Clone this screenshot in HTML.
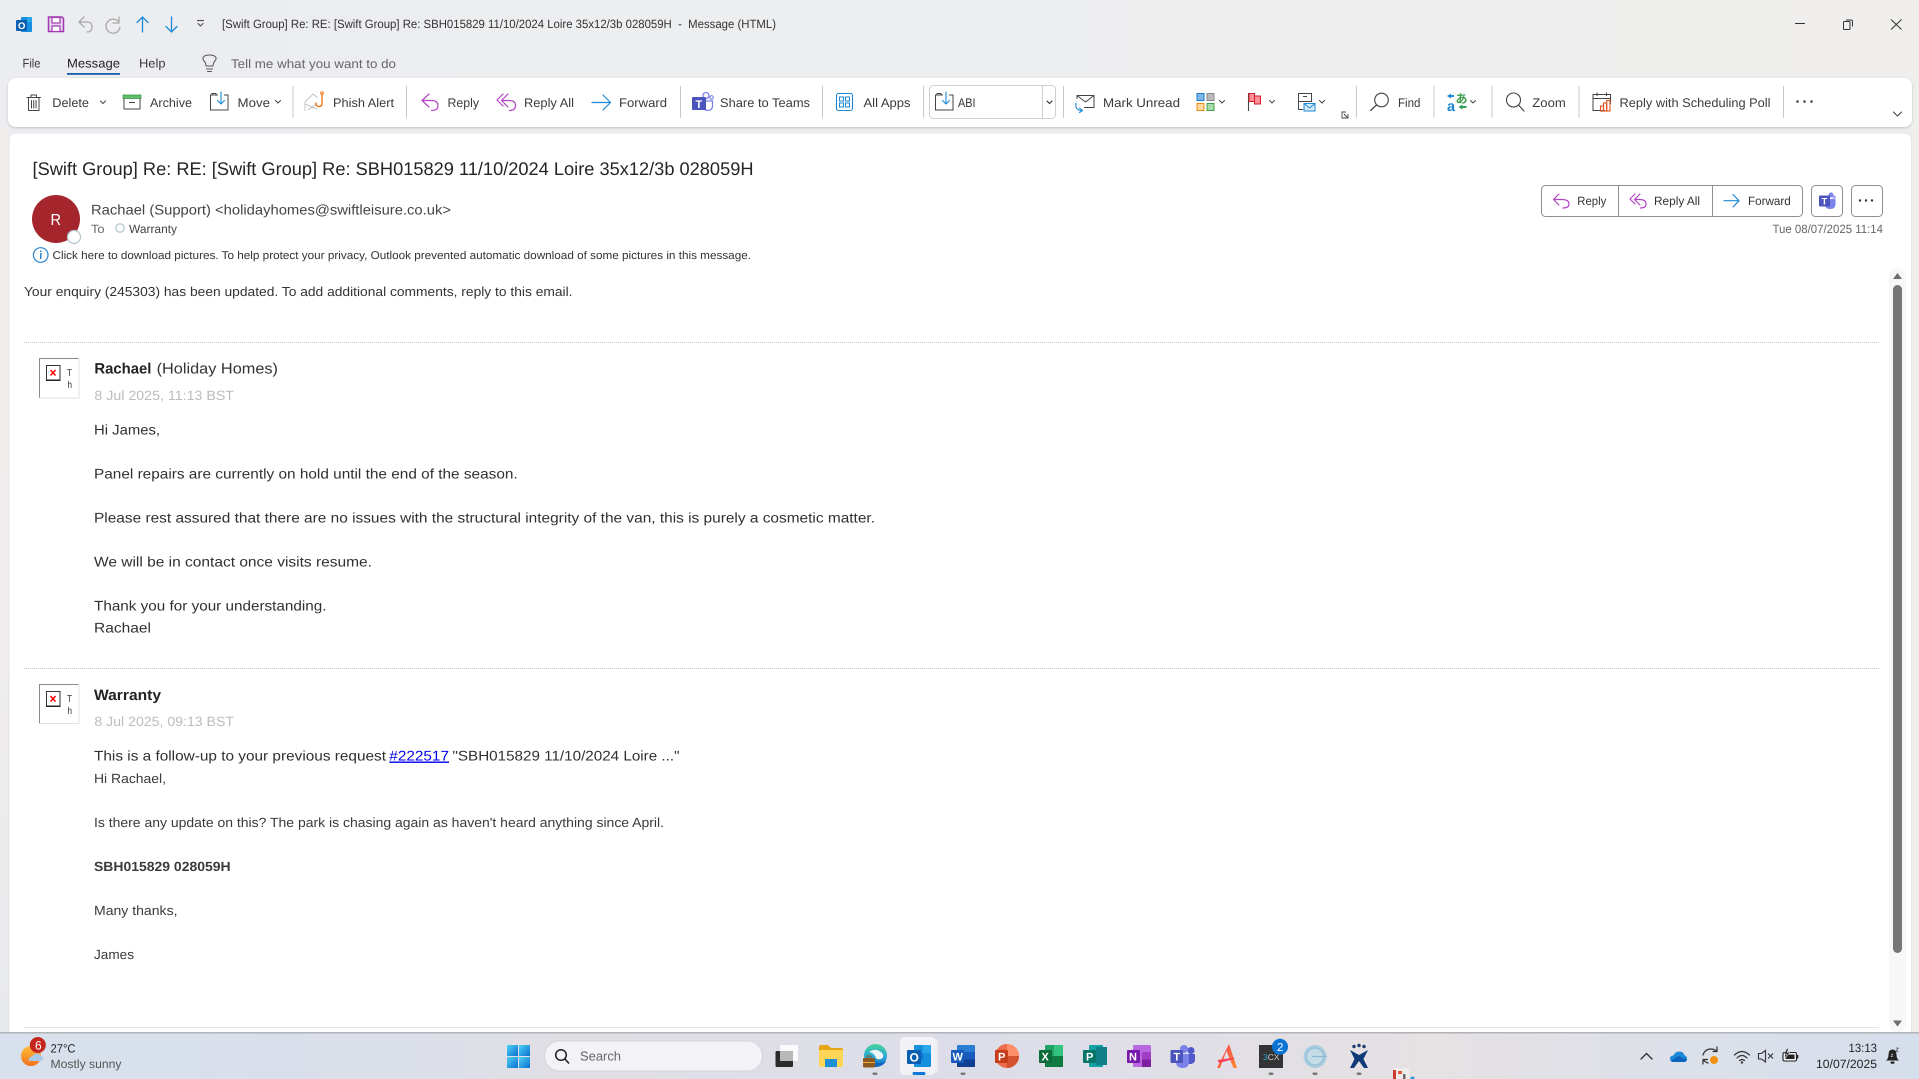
<!DOCTYPE html>
<html lang="en"><head><meta charset="utf-8"><title>[Swift Group] Re: RE: [Swift Group] Re: SBH015829 - Message (HTML)</title>
<style>
html,body{margin:0;padding:0;width:1919px;height:1079px;overflow:hidden;background:#ecedf0}
svg{display:block}
text{font-family:"Liberation Sans","Noto Sans CJK JP",sans-serif;fill:#333;text-rendering:geometricPrecision;white-space:pre}
.t{font-size:12.5px;fill:#3a3a3a}
.b{font-size:14px;fill:#303030}
.m{font-size:13.3px;fill:#3b3b3b}
.s{font-size:12px;fill:#666}
.i{stroke-linecap:round;stroke-linejoin:round;fill:none}
</style></head><body>
<svg xmlns="http://www.w3.org/2000/svg" width="1919" height="1079" viewBox="0 0 1919 1079">
<defs>
<linearGradient id="chrome" x1="0" x2="1" y1="0" y2="0"><stop offset="0" stop-color="#ecedf0"/><stop offset="0.5" stop-color="#edeef0"/><stop offset="1" stop-color="#efeeec"/></linearGradient>
<linearGradient id="side" x1="0" x2="0" y1="0" y2="1"><stop offset="0" stop-color="#f0eeec"/><stop offset="0.6" stop-color="#efeded"/><stop offset="1" stop-color="#e8e9ec"/></linearGradient>
<linearGradient id="task" x1="0" x2="1" y1="0" y2="0"><stop offset="0" stop-color="#d7e0ec"/><stop offset="0.2" stop-color="#dadfea"/><stop offset="0.3" stop-color="#e2dfe4"/><stop offset="0.5" stop-color="#dcdde9"/><stop offset="0.75" stop-color="#e6e1e3"/><stop offset="0.88" stop-color="#dce0e9"/><stop offset="1" stop-color="#d5deeb"/></linearGradient>
<linearGradient id="win" x1="0" x2="1" y1="0" y2="1"><stop offset="0" stop-color="#4fd2f5"/><stop offset="1" stop-color="#0a6fd0"/></linearGradient>
<linearGradient id="sun" x1="0" x2="0" y1="0" y2="1"><stop offset="0" stop-color="#ffc03a"/><stop offset="1" stop-color="#f2701c"/></linearGradient>
<linearGradient id="adobe" x1="0" x2="1" y1="0" y2="1"><stop offset="0" stop-color="#fb3e5a"/><stop offset="1" stop-color="#fb8a2a"/></linearGradient>
<linearGradient id="edge" x1="0" x2="0" y1="0" y2="1"><stop offset="0" stop-color="#46d39a"/><stop offset=".55" stop-color="#2aa8d8"/><stop offset="1" stop-color="#1268c0"/></linearGradient>
<filter id="sh" x="-2%" y="-20%" width="104%" height="150%"><feDropShadow dx="0" dy="1" stdDeviation="1.2" flood-color="#000" flood-opacity=".18"/></filter>
</defs>

<rect width="1919" height="1079" fill="url(#chrome)"/>
<rect x="0" y="128" width="9" height="905" fill="url(#side)"/>

<!-- Title bar -->
<rect x="21" y="17" width="11" height="15" rx="1" fill="#1490df"/><rect x="27" y="17" width="5" height="5" fill="#28a8ea"/><rect x="16" y="20" width="11" height="11" rx="1" fill="#0a5fb0"/><text x="18" y="29" style="font-size:9.5px;font-weight:bold;fill:#fff">O</text>
<path d="M48.500 17H62L63.500 18.500V31.500H48.500Z" fill="#e8d3ee" stroke="#a03cb0" stroke-width="1.500"/><rect x="52" y="17.500" width="8" height="5.500" fill="#fff" stroke="#a03cb0" stroke-width="1.200"/><rect x="52" y="26" width="8" height="5.500" fill="#fff" stroke="#a03cb0" stroke-width="1.200"/>
<path class="i" d="M84 17L79 22L84 27M79.500 22H87Q92 22 92 27Q92 32 87 32" stroke="#aaa" stroke-width="1.300"/>
<path class="i" d="M119 17V23H113M119 22.500A7 7 0 1 0 120 27" stroke="#aaa" stroke-width="1.300"/>
<path class="i" d="M142.500 17V32M137 22.500L142.500 17L148 22.500" stroke="#1a8ad8" stroke-width="1.300"/>
<path class="i" d="M171.500 17V32M166 26.500L171.500 32L177 26.500" stroke="#1a8ad8" stroke-width="1.300"/>
<path d="M197 20.500H204" stroke="#555" stroke-width="1.200"/><path class="i" d="M198 23.500L200.500 26L203 23.500" stroke="#555" stroke-width="1.200"/>
<text x="222" y="28.200" style="font-size:12px" fill="#333" textLength="554" lengthAdjust="spacingAndGlyphs">[Swift Group] Re: RE: [Swift Group] Re: SBH015829 11/10/2024 Loire 35x12/3b 028059H  -  Message (HTML)</text>
<path d="M1795 23.500H1805" stroke="#333" stroke-width="1"/>
<rect x="1843.500" y="21.500" width="6.500" height="8" rx="1" fill="none" stroke="#333" stroke-width="1"/><path d="M1846 20H1851Q1852.500 20 1852.500 21.500V26.500" fill="none" stroke="#333" stroke-width="1"/>
<path d="M1891 19.500L1901.500 29.500M1901.500 19.500L1891 29.500" stroke="#333" stroke-width="1"/>

<!-- Tabs -->
<text x="22.500" y="67.500" class="t" fill="#333" textLength="18" lengthAdjust="spacingAndGlyphs">File</text>
<text x="67" y="67.500" class="t" style="fill:#222" textLength="53" lengthAdjust="spacingAndGlyphs">Message</text>
<rect x="67" y="73" width="53" height="1.800" fill="#1a5fa8"/>
<text x="139" y="67.500" class="t" textLength="26.500" lengthAdjust="spacingAndGlyphs">Help</text>
<path class="i" d="M206 66Q206 63 204 61Q202.500 59 203 57.500Q204.500 55 209.500 55Q214.500 55 216 57.500Q216.500 59 215 61Q213 63 213 66ZM206.500 69H212.500M207.500 71.500H211.500" stroke="#555" stroke-width="1"/>
<text x="231" y="68" class="t" style="fill:#666" textLength="165" lengthAdjust="spacingAndGlyphs">Tell me what you want to do</text>

<!-- Ribbon -->
<rect x="8" y="78" width="1904" height="49" rx="8" fill="#fff" filter="url(#sh)"/>
<g fill="#c8c8c8"><rect x="292.500" y="86" width="1" height="32"/><rect x="406" y="86" width="1" height="32"/><rect x="680" y="86" width="1" height="32"/><rect x="822" y="86" width="1" height="32"/><rect x="923" y="86" width="1" height="32"/><rect x="1063" y="86" width="1" height="32"/><rect x="1356" y="86" width="1" height="32"/><rect x="1433.500" y="86" width="1" height="32"/><rect x="1491.500" y="86" width="1" height="32"/><rect x="1578.500" y="86" width="1" height="32"/><rect x="1783" y="86" width="1" height="32"/></g>
<!-- Delete -->
<path class="i" d="M27 97.500H40.500M31 97V95H36.500V97M28.500 98V110.500H39V98M31.500 100.500V108M33.700 100.500V108M36 100.500V108" stroke="#444" stroke-width="1"/>
<text x="52.300" y="107" class="t" textLength="36.700" lengthAdjust="spacingAndGlyphs">Delete</text>
<path class="i" d="M100.500 101L103 103.500L105.500 101" stroke="#444" stroke-width="1"/>
<!-- Archive -->
<rect x="123" y="95" width="18" height="3.500" fill="#61bd6d" stroke="#3f9c4d" stroke-width=".8"/>
<path d="M124 98.500V109H140V98.500M129 102.500H135" fill="none" stroke="#444" stroke-width="1"/>
<text x="150" y="107" class="t" textLength="42" lengthAdjust="spacingAndGlyphs">Archive</text>
<!-- Move -->
<path d="M218 95H210.500V110H228V95H224M212 95V93.500H216V95" fill="none" stroke="#444" stroke-width="1"/>
<path class="i" d="M221 92V104M217.500 100.500L221 104L224.500 100.500" stroke="#1a8ad8" stroke-width="1.100"/>
<text x="237.500" y="107" class="t" textLength="32.500" lengthAdjust="spacingAndGlyphs">Move</text>
<path class="i" d="M275.500 100.500L278 103L280.500 100.500" stroke="#444" stroke-width="1"/>
<!-- Phish -->
<path d="M305 111V102L313 94L318 98M305 104L317 109M316 104L308 110" fill="none" stroke="#c4c4c4" stroke-width="1"/>
<path class="i" d="M322 94V103.500Q322 106.500 319 106.500Q316 106.500 316 103" stroke="#ee7a1c" stroke-width="1.400"/><circle cx="322" cy="93" r="1.300" fill="none" stroke="#ee7a1c"/>
<text x="333" y="107" class="t" textLength="61" lengthAdjust="spacingAndGlyphs">Phish Alert</text>
<!-- Reply -->
<path class="i" d="M429 94L422 100.500L429 107M422.500 100.500H431Q438 100.500 438 105.500Q438 110.500 431.500 110.500" stroke="#b146c2" stroke-width="1.200"/>
<text x="447.500" y="107" class="t" textLength="31.500" lengthAdjust="spacingAndGlyphs">Reply</text>
<path class="i" d="M503 94L497 100L503 106M508 94L501.500 100.500L508 107M502 100.500H509Q515.500 100.500 515.500 105.500Q515.500 110.500 509.500 110.500" stroke="#b146c2" stroke-width="1.200"/>
<text x="524" y="107" class="t" textLength="50" lengthAdjust="spacingAndGlyphs">Reply All</text>
<path class="i" d="M592 102.500H610M603 95L610.500 102.500L603 110" stroke="#1e8ad6" stroke-width="1.200"/>
<text x="619" y="107" class="t" textLength="48" lengthAdjust="spacingAndGlyphs">Forward</text>
<!-- Share to Teams -->
<circle cx="706" cy="95.500" r="3" fill="none" stroke="#7b83eb" stroke-width="1.300"/><circle cx="711.500" cy="97.500" r="1.800" fill="none" stroke="#7b83eb" stroke-width="1.100"/><path d="M703 101H712.500V106Q712.500 110 708 110.500Q703.500 110.500 703 106" fill="none" stroke="#7b83eb" stroke-width="1.300"/>
<rect x="692" y="97" width="14" height="13" rx="1" fill="#4b53bc"/><text x="695.500" y="108" style="font-size:11px;font-weight:bold;fill:#fff">T</text>
<text x="720" y="107" class="t" textLength="90" lengthAdjust="spacingAndGlyphs">Share to Teams</text>
<!-- All Apps -->
<rect x="836.500" y="93.500" width="16" height="17" rx="2" fill="none" stroke="#1e88d4" stroke-width="1.100"/><g fill="none" stroke="#1e88d4"><rect x="839.500" y="97" width="4" height="4"/><rect x="845.500" y="97" width="4" height="4"/><rect x="839.500" y="103" width="4" height="4"/><rect x="845.500" y="103" width="4" height="4"/></g>
<text x="863.500" y="107" class="t" textLength="47" lengthAdjust="spacingAndGlyphs">All Apps</text>
<!-- Combo -->
<rect x="929.500" y="85.500" width="126" height="33" rx="4" fill="#fff" stroke="#d0d0d0"/><path d="M1042.500 85.500V118.500" stroke="#d0d0d0"/>
<path d="M943 95H935.500V110H953V95H949M937 95V93.500H941V95" fill="none" stroke="#444" stroke-width="1"/>
<path class="i" d="M946 92V104M942.500 100.500L946 104L949.500 100.500" stroke="#1a8ad8" stroke-width="1.100"/>
<text x="958" y="107" style="font-size:12.5px;fill:#333" textLength="17.500" lengthAdjust="spacingAndGlyphs">ABI</text>
<path class="i" d="M1047 101L1049.500 103.500L1052 101" stroke="#333" stroke-width="1.100"/>
<!-- Mark Unread -->
<path d="M1081 95.500H1094V107.500H1084M1077 99V95.500H1081M1077 95.500L1085.500 102L1094 95.500" fill="none" stroke="#444" stroke-width="1"/>
<path class="i" d="M1076 103Q1074.500 110 1082 110.500M1079.500 108L1082.500 110.500L1079.500 112.500" stroke="#1e8ad6" stroke-width="1.100"/>
<text x="1103" y="107" class="t" textLength="77" lengthAdjust="spacingAndGlyphs">Mark Unread</text>
<!-- Categorize -->
<rect x="1197" y="93.500" width="7" height="7" fill="#7cb7e8" stroke="#1e78c8"/><rect x="1207" y="93.500" width="7" height="7" fill="#bbb" stroke="#888"/><rect x="1197" y="103.500" width="7" height="7" fill="#ffd9a0" stroke="#e88a14"/><rect x="1207" y="103.500" width="7" height="7" fill="#a8dcae" stroke="#3fa04d"/>
<path class="i" d="M1219.500 100.500L1222 103L1224.500 100.500" stroke="#444" stroke-width="1"/>
<!-- Flag -->
<path d="M1248.500 93V111" stroke="#444" stroke-width="1.100"/>
<path d="M1254.500 96H1260.500V104H1254.500Z" fill="#ff8f98" stroke="#d0202a"/><path d="M1249 93.500H1254.500V101.500H1249Z" fill="#ff8f98" stroke="#d0202a"/>
<path class="i" d="M1269.500 100.500L1272 103L1274.500 100.500" stroke="#444" stroke-width="1"/>
<!-- Rules -->
<path d="M1303 109.500H1298.500V93.500H1311.500V102M1298.500 101.500H1311.500M1303 96.500H1307" fill="none" stroke="#444" stroke-width="1"/>
<rect x="1304" y="103.500" width="11" height="7.500" fill="#d6ebfa" stroke="#1e88d4"/><path d="M1304 103.500L1309.500 108L1315 103.500" fill="none" stroke="#1e88d4"/>
<path class="i" d="M1319.500 100.500L1322 103L1324.500 100.500" stroke="#444" stroke-width="1"/>
<path d="M1346 112H1342V118H1348V114M1344 114L1348 118M1348 115.500V118H1345.500" fill="none" stroke="#444" stroke-width=".9"/>
<!-- Find -->
<circle cx="1381.500" cy="100" r="6.800" fill="none" stroke="#444" stroke-width="1.100"/><path class="i" d="M1376.500 105L1370.500 110.500" stroke="#444" stroke-width="1.200"/>
<text x="1398" y="107" class="t" textLength="22.500" lengthAdjust="spacingAndGlyphs">Find</text>
<!-- Translate -->
<text x="1447" y="111" style="font-size:14.500px;fill:#1e88d4;font-weight:bold">a</text>
<text x="1455.500" y="103" style="font-size:12px;fill:#3fa04d;font-weight:bold">あ</text>
<path d="M1447 96L1451 93.500V95H1454V97H1451V98.500Z" fill="#1e88d4"/>
<path d="M1466.500 107L1462.500 104.500V106H1458.500V108H1462.500V109.500Z" fill="#2e9e54" transform="rotate(180 1462.500 107)"/>
<path class="i" d="M1470.500 100.500L1473 103L1475.500 100.500" stroke="#444" stroke-width="1"/>
<!-- Zoom -->
<circle cx="1513.500" cy="100" r="7" fill="none" stroke="#444" stroke-width="1.100"/><path class="i" d="M1518.500 105L1524 111" stroke="#444" stroke-width="1.200"/>
<text x="1532.300" y="107" class="t" textLength="33.500" lengthAdjust="spacingAndGlyphs">Zoom</text>
<!-- Poll -->
<path d="M1605 110.500H1593V94.500H1610.500V104M1593 98.500H1610.500M1597 92.500V96M1606.500 92.500V96" fill="none" stroke="#444" stroke-width="1"/>
<g fill="none" stroke="#e5521c" stroke-width="1.100"><rect x="1600.500" y="106" width="3" height="5"/><rect x="1603.500" y="103" width="3.200" height="8"/><rect x="1606.700" y="100.500" width="3.300" height="10.500"/></g>
<text x="1619.500" y="107" class="t" textLength="151" lengthAdjust="spacingAndGlyphs">Reply with Scheduling Poll</text>
<circle cx="1797.500" cy="101.500" r="1.300" fill="#444"/><circle cx="1804.500" cy="101.500" r="1.300" fill="#444"/><circle cx="1811.500" cy="101.500" r="1.300" fill="#444"/>
<path class="i" d="M1893.500 112L1897.500 116L1901.500 112" stroke="#444" stroke-width="1.100"/>

<!-- Message card -->
<path d="M9 1033V141Q9 133 17 133H1904Q1911.500 133 1911.500 141V1033Z" fill="#fff" stroke="#e2e2e2" stroke-width=".8"/>
<text x="32.500" y="175" style="font-size:18.300px;fill:#242424" textLength="721" lengthAdjust="spacingAndGlyphs">[Swift Group] Re: RE: [Swift Group] Re: SBH015829 11/10/2024 Loire 35x12/3b 028059H</text>
<circle cx="56" cy="219" r="24" fill="#a4262c"/>
<text x="50.500" y="225" style="font-size:16px;fill:#fff" textLength="10.500" lengthAdjust="spacingAndGlyphs">R</text>
<circle cx="74" cy="237" r="6.500" fill="#fff" stroke="#b4c4cc" stroke-width="1.200"/>
<text x="91" y="214.500" style="font-size:14px;fill:#444" textLength="360" lengthAdjust="spacingAndGlyphs">Rachael (Support) &lt;holidayhomes@swiftleisure.co.uk&gt;</text>
<text x="91" y="233" class="s" textLength="13.600" lengthAdjust="spacingAndGlyphs">To</text>
<circle cx="120" cy="228" r="4.200" fill="#fff" stroke="#a6bcc8" stroke-width="1.100"/>
<text x="129" y="233" style="font-size:12px;fill:#444" textLength="48" lengthAdjust="spacingAndGlyphs">Warranty</text>
<circle cx="40.700" cy="255" r="7.300" fill="#fff" stroke="#2a86d0" stroke-width="1.200"/><rect x="40" y="253" width="1.500" height="6" fill="#2a86d0"/><rect x="40" y="250.500" width="1.500" height="1.500" fill="#2a86d0"/>
<text x="52.500" y="259" style="font-size:11.300px;fill:#333" textLength="698.500" lengthAdjust="spacingAndGlyphs">Click here to download pictures. To help protect your privacy, Outlook prevented automatic download of some pictures in this message.</text>
<text x="24" y="296" style="font-size:13px;fill:#333" textLength="548.500" lengthAdjust="spacingAndGlyphs">Your enquiry (245303) has been updated. To add additional comments, reply to this email.</text>

<!-- Reply header buttons -->
<rect x="1541.500" y="185.500" width="261" height="31" rx="4" fill="#fff" stroke="#8f8f8f"/>
<path d="M1618.500 185.500V216.500M1712.500 185.500V216.500" stroke="#8f8f8f"/>
<path class="i" d="M1559 194L1553.500 199.500L1559 205M1554 199.500H1562Q1569 199.500 1569 204Q1569 208 1563 208" stroke="#b146c2" stroke-width="1.200"/>
<text x="1577.300" y="205" style="font-size:12px;fill:#333" textLength="29" lengthAdjust="spacingAndGlyphs">Reply</text>
<path class="i" d="M1635 194L1630 199L1635 204M1640 194L1634.500 199.500L1640 205M1635 199.500H1640Q1646 199.500 1646 204Q1646 208 1640.500 208" stroke="#b146c2" stroke-width="1.200"/>
<text x="1654" y="205" style="font-size:12px;fill:#333" textLength="46" lengthAdjust="spacingAndGlyphs">Reply All</text>
<path class="i" d="M1724 200.700H1739M1733 194.500L1739 200.700L1733 207" stroke="#1e8ad6" stroke-width="1.200"/>
<text x="1748" y="205" style="font-size:12px;fill:#333" textLength="42.700" lengthAdjust="spacingAndGlyphs">Forward</text>
<rect x="1811.500" y="185.500" width="31" height="31" rx="4" fill="#fff" stroke="#8f8f8f"/>
<circle cx="1831" cy="195" r="2.500" fill="#7b83eb"/><circle cx="1834" cy="197" r="1.700" fill="#9a9fef"/><path d="M1825 199H1835.500V204Q1835.500 209 1830 209Q1825 209 1825 204Z" fill="#7b83eb"/>
<rect x="1819" y="195.500" width="11" height="11" rx="1" fill="#4b53bc"/><text x="1821.500" y="204.500" style="font-size:9.500px;font-weight:bold;fill:#fff">T</text>
<rect x="1851.500" y="185.500" width="31" height="31" rx="4" fill="#fff" stroke="#8f8f8f"/>
<circle cx="1860" cy="200.500" r="1.200" fill="#333"/><circle cx="1866" cy="200.500" r="1.200" fill="#333"/><circle cx="1872" cy="200.500" r="1.200" fill="#333"/>
<text x="1772.500" y="233" class="s" textLength="110.500" lengthAdjust="spacingAndGlyphs">Tue 08/07/2025 11:14</text>

<!-- First comment -->
<path d="M24 342.500H1880" stroke="#c4c4c4" stroke-dasharray="1 1"/>
<path d="M39.500 398V358.500H78.500" fill="none" stroke="#8a8a8a"/><path d="M79 358.500V398H39.500" fill="none" stroke="#e2e2e2"/>
<rect x="46.500" y="365.500" width="13.500" height="15" fill="#fff" stroke="#333"/><rect x="46" y="379.500" width="14.500" height="1.300" fill="#222"/>
<path d="M50.500 370L55.500 375.500M55.500 370L50.500 375.500" stroke="#f00" stroke-width="1.500"/>
<text x="67" y="376" style="font-size:10px;fill:#333" textLength="5" lengthAdjust="spacingAndGlyphs">T</text><text x="67.500" y="388" style="font-size:10px;fill:#333" textLength="4.500" lengthAdjust="spacingAndGlyphs">h</text>
<text x="94.400" y="373.700" style="font-size:15px;font-weight:bold;fill:#222" textLength="57" lengthAdjust="spacingAndGlyphs">Rachael</text>
<text x="156.600" y="373.700" style="font-size:15px;fill:#333" textLength="121.400" lengthAdjust="spacingAndGlyphs">(Holiday Homes)</text>
<text x="94.400" y="400" style="font-size:13.500px;fill:#bcbcbc" textLength="139.600" lengthAdjust="spacingAndGlyphs">8 Jul 2025, 11:13 BST</text>
<text x="94" y="434.500" class="b" textLength="66" lengthAdjust="spacingAndGlyphs">Hi James,</text>
<text x="94" y="478.500" class="b" textLength="423.700" lengthAdjust="spacingAndGlyphs">Panel repairs are currently on hold until the end of the season.</text>
<text x="94" y="522.500" class="b" textLength="781" lengthAdjust="spacingAndGlyphs">Please rest assured that there are no issues with the structural integrity of the van, this is purely a cosmetic matter.</text>
<text x="94" y="566.500" class="b" textLength="278" lengthAdjust="spacingAndGlyphs">We will be in contact once visits resume.</text>
<text x="94" y="610.500" class="b" textLength="232.500" lengthAdjust="spacingAndGlyphs">Thank you for your understanding.</text>
<text x="94" y="632.500" class="b" textLength="57" lengthAdjust="spacingAndGlyphs">Rachael</text>

<!-- Second comment -->
<path d="M24 668.500H1880" stroke="#c4c4c4" stroke-dasharray="1 1"/>
<path d="M39.500 723.500V684.500H78.500" fill="none" stroke="#8a8a8a"/><path d="M79 684.500V723.500H39.500" fill="none" stroke="#e2e2e2"/>
<rect x="46.500" y="691.500" width="13.500" height="15" fill="#fff" stroke="#333"/><rect x="46" y="705.500" width="14.500" height="1.300" fill="#222"/>
<path d="M50.500 696L55.500 701.500M55.500 696L50.500 701.500" stroke="#f00" stroke-width="1.500"/>
<text x="67" y="702" style="font-size:10px;fill:#333" textLength="5" lengthAdjust="spacingAndGlyphs">T</text><text x="67.500" y="714" style="font-size:10px;fill:#333" textLength="4.500" lengthAdjust="spacingAndGlyphs">h</text>
<text x="94" y="700" style="font-size:15px;font-weight:bold;fill:#222" textLength="67" lengthAdjust="spacingAndGlyphs">Warranty</text>
<text x="94.400" y="726" style="font-size:13.500px;fill:#bcbcbc" textLength="139.600" lengthAdjust="spacingAndGlyphs">8 Jul 2025, 09:13 BST</text>
<text x="94" y="760.500" class="b" textLength="292" lengthAdjust="spacingAndGlyphs">This is a follow-up to your previous request</text>
<text x="389.300" y="760.500" class="b" style="fill:#0000ee;text-decoration:underline" textLength="59.700" lengthAdjust="spacingAndGlyphs">#222517</text>
<text x="452.500" y="760.500" class="b" textLength="227" lengthAdjust="spacingAndGlyphs">"SBH015829 11/10/2024 Loire ..."</text>
<text x="94" y="783" class="m" textLength="72" lengthAdjust="spacingAndGlyphs">Hi Rachael,</text>
<text x="94" y="827" class="m" textLength="570" lengthAdjust="spacingAndGlyphs">Is there any update on this? The park is chasing again as haven't heard anything since April.</text>
<text x="94" y="871" class="m" style="font-weight:bold" textLength="136.600" lengthAdjust="spacingAndGlyphs">SBH015829 028059H</text>
<text x="94" y="915" class="m" textLength="83.500" lengthAdjust="spacingAndGlyphs">Many thanks,</text>
<text x="94" y="959" class="m" textLength="40" lengthAdjust="spacingAndGlyphs">James</text>
<path d="M24 1027.500H1879" stroke="#e4e4e4"/>

<!-- Scrollbar -->
<rect x="1889" y="268" width="17" height="764" rx="8" fill="#f7f7f7"/>
<path d="M1897.500 273L1902 279H1893Z" fill="#6e6e6e"/>
<rect x="1893" y="285" width="9" height="668" rx="4.500" fill="#767676"/>
<path d="M1893 1020.500H1902L1897.500 1026.500Z" fill="#6e6e6e"/>

<!-- Taskbar -->
<rect x="0" y="1033" width="1919" height="46" fill="url(#task)"/>
<rect x="0" y="1032" width="1919" height="1.500" fill="#b2b3b8"/>
<!-- weather -->
<circle cx="31" cy="1056" r="10" fill="url(#sun)"/>
<path d="M29 1061H41Q43 1061 43 1058.500Q43 1056 40.500 1056Q39.500 1053 36 1053.500Q33 1054 32.500 1056.500Q29 1056.500 29 1059Z" fill="#a9c9e8"/>
<circle cx="37.800" cy="1045" r="8" fill="#c4261d"/>
<text x="35" y="1049.500" style="font-size:12px;fill:#fff">6</text>
<text x="50.500" y="1052.300" style="font-size:12px;fill:#222" textLength="25" lengthAdjust="spacingAndGlyphs">27°C</text>
<text x="50.500" y="1068" style="font-size:12px;fill:#555" textLength="71" lengthAdjust="spacingAndGlyphs">Mostly sunny</text>
<!-- windows -->
<g fill="url(#win)"><rect x="507" y="1045" width="11" height="11"/><rect x="519" y="1045" width="11" height="11"/><rect x="507" y="1057" width="11" height="11"/><rect x="519" y="1057" width="11" height="11"/></g>
<!-- search -->
<rect x="544.500" y="1041" width="218" height="30" rx="15" fill="#f2f2f7" stroke="#d4d4da"/>
<circle cx="561" cy="1055" r="5.300" fill="none" stroke="#222" stroke-width="1.500"/><path d="M565 1059L569 1063.500" stroke="#222" stroke-width="1.600"/>
<text x="580" y="1060.500" style="font-size:13px;fill:#666" textLength="41" lengthAdjust="spacingAndGlyphs">Search</text>
<!-- task view -->
<rect x="775.500" y="1051" width="17.500" height="16" rx="1" fill="#2b2b2b"/>
<rect x="780" y="1045" width="18" height="16" rx="1" fill="#fff" opacity=".85"/><rect x="780" y="1051" width="13" height="10" fill="#b8b8b8"/>
<!-- explorer -->
<path d="M819 1048Q819 1045 821 1045H828L831 1048H841Q843 1048 843 1050V1053H819Z" fill="#e8a712"/>
<rect x="819" y="1050" width="24" height="17" rx="1.500" fill="#ffd557"/><rect x="825" y="1059" width="12" height="8" fill="#1e90d8"/>
<!-- edge -->
<circle cx="875.500" cy="1055.500" r="11.500" fill="url(#edge)"/>
<path d="M869 1052Q876 1047 882 1053Q885 1057 881 1059Q876 1060 875.500 1057Q873 1052 869 1052Z" fill="#eef4f8"/>
<path d="M872 1057Q875 1066 886 1061Q883 1067 875 1067Z" fill="#1268c0"/>
<rect x="863" y="1058" width="12" height="9.500" rx="1" fill="#8a5a22"/><rect x="867" y="1056" width="4" height="3" fill="none" stroke="#8a5a22"/><rect x="863" y="1062" width="12" height="1" fill="#f0b040"/>
<rect x="872.500" y="1072.500" width="5" height="2.500" rx="1.200" fill="#777"/>
<!-- outlook -->
<rect x="934" y="1039" width="4" height="34" rx="2" fill="#ededf2"/>
<rect x="900" y="1037" width="35" height="38" rx="4" fill="#f1f1f6"/>
<rect x="914" y="1045" width="17" height="22" rx="1" fill="#1490df"/><rect x="923" y="1045" width="8" height="8" fill="#28a8ea"/><rect x="914" y="1053" width="9" height="7" fill="#0f78d4"/>
<rect x="907" y="1050" width="14" height="14" rx="1" fill="#0a5fb0"/><text x="909.500" y="1061.500" style="font-size:12px;font-weight:bold;fill:#fff">O</text>
<rect x="912.500" y="1072" width="13" height="3" rx="1.500" fill="#0f78d4"/>
<!-- word -->
<rect x="957" y="1045" width="18" height="22" rx="1" fill="#2b7cd3"/><rect x="957" y="1052" width="18" height="7.500" fill="#185abd"/><rect x="957" y="1059.500" width="18" height="7.500" fill="#103f91"/>
<rect x="951" y="1050" width="13" height="13" rx="1" fill="#185abd"/><text x="952.500" y="1060.500" style="font-size:11px;font-weight:bold;fill:#fff">W</text>
<rect x="960.500" y="1072.500" width="5" height="2.500" rx="1.200" fill="#777"/>
<!-- ppt -->
<circle cx="1007" cy="1056" r="12" fill="#ed6c47"/><path d="M1007 1044A12 12 0 0 1 1019 1056H1007Z" fill="#ff8f6b"/><path d="M1007 1068A12 12 0 0 0 1019 1056H1007Z" fill="#d35230"/>
<rect x="995" y="1050" width="13" height="13" rx="1" fill="#c43e1c"/><text x="998" y="1060.500" style="font-size:11px;font-weight:bold;fill:#fff">P</text>
<!-- excel -->
<rect x="1045" y="1045" width="18" height="22" rx="1" fill="#21a366"/><rect x="1054" y="1045" width="9" height="11" fill="#33c481"/><rect x="1045" y="1056" width="18" height="11" fill="#107c41"/>
<rect x="1039" y="1050" width="13" height="13" rx="1" fill="#0e6b3a"/><text x="1041.500" y="1060.500" style="font-size:11px;font-weight:bold;fill:#fff">X</text>
<!-- publisher -->
<rect x="1089" y="1045" width="14" height="22" rx="1" fill="#13a3a3"/><rect x="1096" y="1047" width="11" height="18" fill="#0f7f86"/>
<rect x="1083" y="1050" width="13" height="13" rx="1" fill="#077568"/><text x="1086" y="1060.500" style="font-size:11px;font-weight:bold;fill:#fff">P</text>
<!-- onenote -->
<rect x="1133" y="1045" width="18" height="22" rx="1" fill="#ba68e0"/><rect x="1142" y="1052" width="9" height="7.500" fill="#a33fc4"/><rect x="1142" y="1059.500" width="9" height="7.500" fill="#7e1fa2"/>
<rect x="1127" y="1050" width="13" height="13" rx="1" fill="#7719aa"/><text x="1129" y="1060.500" style="font-size:11px;font-weight:bold;fill:#fff">N</text>
<!-- teams -->
<circle cx="1191" cy="1050.500" r="3.500" fill="#5059c9"/><circle cx="1184" cy="1049" r="4" fill="#7b83eb"/>
<path d="M1186 1054H1195V1060Q1195 1063 1191 1064H1186Z" fill="#5059c9"/><path d="M1176 1054H1189V1062Q1189 1068 1183 1068Q1176 1068 1176 1062Z" fill="#7b83eb"/>
<rect x="1170.500" y="1050" width="12.500" height="13" rx="1" fill="#4b53bc"/><text x="1173.500" y="1060.500" style="font-size:11px;font-weight:bold;fill:#fff">T</text>
<!-- adobe-like -->
<path d="M1229 1044L1237 1068H1233.500L1226.500 1051L1220 1068H1217Z" fill="url(#adobe)"/><path d="M1217.500 1060L1234 1057.500V1059L1219 1063Z" fill="#fb3e5a"/>
<!-- 3cx -->
<rect x="1259" y="1045" width="24" height="23" fill="#333"/>
<text x="1263" y="1060" style="font-size:8.500px;fill:#ccc"><tspan fill="#2aa8e0">3</tspan>CX</text>
<circle cx="1280" cy="1046.700" r="8" fill="#0a74d4"/><text x="1277" y="1051" style="font-size:11.500px;fill:#fff">2</text>
<rect x="1268.500" y="1072.500" width="5" height="2.500" rx="1.200" fill="#777"/>
<!-- circle app -->
<circle cx="1315" cy="1056.500" r="11.500" fill="#a9cde0"/><circle cx="1315" cy="1056.500" r="8.500" fill="#c4dbe8" stroke="#8fbad2"/><path d="M1312 1056.500H1327" stroke="#8fb8d0" stroke-width="1.200"/>
<rect x="1312.500" y="1072.500" width="5" height="2.500" rx="1.200" fill="#777"/>
<!-- figure -->
<circle cx="1354" cy="1046.500" r="1.700" fill="#1e3a6e"/><circle cx="1359" cy="1045.500" r="1.700" fill="#1e3a6e"/><circle cx="1364" cy="1046.500" r="1.700" fill="#1e3a6e"/>
<path d="M1350 1050L1359 1055L1368 1050L1363.500 1059L1368 1068H1364L1359 1061L1354 1068H1350L1354.500 1059Z" fill="#0f3a78"/>
<rect x="1356.500" y="1072.500" width="5" height="2.500" rx="1.200" fill="#777"/>
<!-- partial app -->
<rect x="1393" y="1068" width="16" height="11" fill="#f1ecec"/><rect x="1393" y="1070" width="3" height="9" fill="#cc3b2a"/><rect x="1398" y="1071" width="4" height="3" fill="#e2583e"/><rect x="1403" y="1074" width="2.500" height="5" fill="#666"/><circle cx="1412.500" cy="1078.500" r="2" fill="#2a9ad8"/>
<!-- tray -->
<path class="i" d="M1641 1059L1646.500 1053.500L1652 1059" stroke="#333" stroke-width="1.400"/>
<path d="M1673.500 1062Q1670 1062 1670 1058.500Q1670 1055.500 1673.500 1055.500Q1675 1051.500 1679.500 1051.500Q1683.500 1051.500 1684.500 1055.500Q1687 1056 1687 1058.800Q1687 1062 1684 1062Z" fill="#1e88d8"/><path d="M1671 1060.500L1678 1056L1687 1059.500Q1686.500 1062 1684 1062H1673.500Q1671.500 1062 1671 1060.500Z" fill="#0a64bd"/>
<path class="i" d="M1703 1055Q1705 1049 1711 1049Q1714 1049 1716.500 1051M1717 1047V1051.500H1713M1703 1064V1059.500H1707.500M1703.500 1060Q1705 1062 1708 1063" stroke="#333" stroke-width="1.200"/>
<circle cx="1714" cy="1060" r="4" fill="#f29111"/>
<path class="i" d="M1734.500 1055Q1742 1048 1749.500 1055M1737 1058Q1742 1053 1747 1058M1739.500 1060.500Q1742 1058.500 1744.500 1060.500" stroke="#333" stroke-width="1.200"/><circle cx="1742" cy="1062.500" r="1.200" fill="#333"/>
<path d="M1758.500 1053.500H1761.500L1765.500 1050.500V1062L1761.500 1059H1758.500Z" fill="none" stroke="#333" stroke-width="1.100"/><path d="M1768 1053.500L1773 1058.500M1773 1053.500L1768 1058.500" stroke="#333" stroke-width="1.100"/>
<rect x="1783" y="1052.500" width="13.500" height="8.500" rx="1.500" fill="#f4f4f8" stroke="#222" stroke-width="1.100"/><rect x="1785" y="1054.500" width="9.500" height="4.500" fill="#222"/><rect x="1797" y="1055" width="1.300" height="3.500" fill="#222"/><path d="M1787 1048.500L1784 1054H1786.800L1785 1059L1789.500 1052.500H1787L1788.500 1048.500Z" fill="#222" stroke="#e4e6ee" stroke-width=".5"/>
<text x="1848.500" y="1052" style="font-size:12px;fill:#222" textLength="28.500" lengthAdjust="spacingAndGlyphs">13:13</text>
<text x="1816" y="1068" style="font-size:12px;fill:#222" textLength="61" lengthAdjust="spacingAndGlyphs">10/07/2025</text>
<path d="M1886 1060.500Q1888.500 1058.500 1888.500 1055Q1888.500 1049.500 1892.500 1049.500Q1896.500 1049.500 1896.500 1055Q1896.500 1058.500 1899 1060.500Z" fill="#222"/><rect x="1890.500" y="1061.500" width="4" height="2.300" rx="1" fill="#222"/>
<text x="1890.500" y="1057" style="font-size:6px;fill:#e4e6ee">z</text><text x="1895.500" y="1051.500" style="font-size:7px;fill:#222">z</text>
</svg>
</body></html>
